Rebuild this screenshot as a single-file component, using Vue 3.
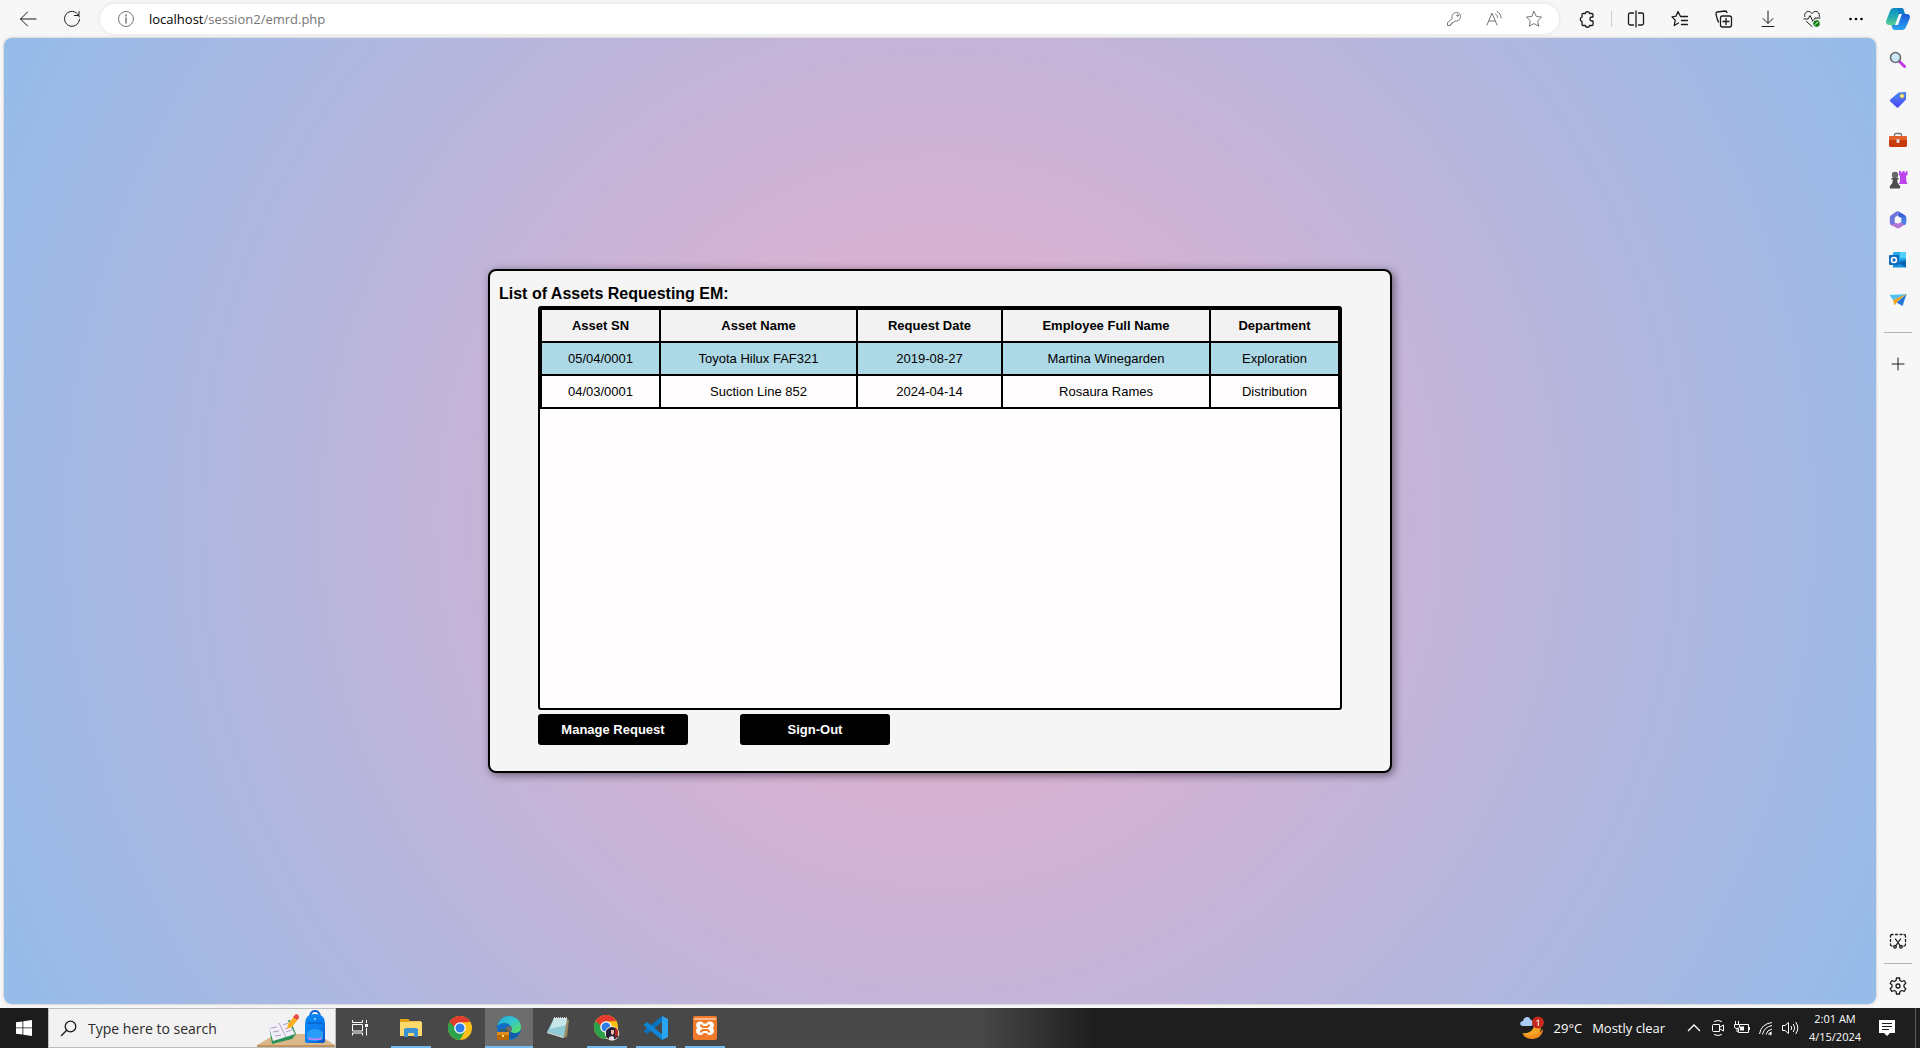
<script setup>
const columns = ['Asset SN', 'Asset Name', 'Request Date', 'Employee Full Name', 'Department']

const requests = [
  { sn: '05/04/0001', name: 'Toyota Hilux FAF321', date: '2019-08-27', employee: 'Martina Winegarden', department: 'Exploration', urgent: true },
  { sn: '04/03/0001', name: 'Suction Line 852', date: '2024-04-14', employee: 'Rosaura Rames', department: 'Distribution', urgent: false }
]
</script>

<template>
  <div class="screen">
    <header class="toolbar">
      <button class="tool" aria-label="Back">
        <svg width="18" height="18" viewBox="0 0 18 18" class="line dark"><path d="M17 9H1.500M8.500 2L1.500 9l7 7" /></svg>
      </button>
      <button class="tool" aria-label="Refresh">
        <svg width="18" height="18" viewBox="0 0 18 18" class="line dark"><path d="M16.300 7A7.500 7.500 0 1 0 16.500 9.500M16 1.500V5.500H11.500" /></svg>
      </button>
      <div class="address">
        <svg width="18" height="18" viewBox="0 0 18 18" class="line muted"><circle cx="9" cy="9" r="7.500" /><path d="M9 8v5M9 5v1" stroke-width="1.500" /></svg>
        <a class="url" href="#"><span class="host">localhost</span>/session2/emrd.php</a>
        <button class="pill-tool" aria-label="Passwords">
          <svg width="16" height="16" viewBox="0 0 16 16" class="line muted"><path d="M6 7.500C5.300 4 7.500 1.500 10.500 1.500c2.500 0 4 1.800 4 4 0 3-2.500 5-5.500 4.500L7.500 11.500H6v1.500H4.500v1.500H1.500V12z" /><circle cx="11.500" cy="4.500" r="0.800" /></svg>
        </button>
        <button class="pill-tool" aria-label="Read aloud">
          <svg width="18" height="18" viewBox="0 0 18 18" class="line muted"><path d="M2 15L7 3l5 12M4 11h6M10.500 4c1.300.7 2 1.800 2 3.500M12 1.500c2.500 1.200 4 3.300 4 6.500" /></svg>
        </button>
        <button class="pill-tool" aria-label="Add to favorites">
          <svg width="18" height="18" viewBox="0 0 18 18" class="line muted"><path d="M9 1.500l2.300 4.900 5.300.7-3.900 3.700 1 5.400L9 13.600l-4.700 2.600 1-5.400L1.400 7.100l5.300-.7z" /></svg>
        </button>
      </div>
      <button class="tool first" aria-label="Extensions">
        <svg width="18" height="18" viewBox="0 0 18 18" class="line dark bold"><path d="M5 3.500H7.300a2.200 2.200 0 0 1 4.300 0H14a1 1 0 0 1 1 1V7h-1a2 2 0 0 0 0 4h1v3.500a1 1 0 0 1-1 1h-2.400a2.200 2.200 0 0 1-4.300 0H5a1 1 0 0 1-1-1v-3a2.200 2.200 0 0 1 0-4.300V4.500a1 1 0 0 1 1-1z" /></svg>
      </button>
      <span class="bar"></span>
      <button class="tool" aria-label="Split screen">
        <svg width="18" height="18" viewBox="0 0 18 18" class="line dark bold"><path d="M6.500 3H3a1.500 1.500 0 0 0-1.500 1.500v9A1.500 1.500 0 0 0 3 15h3.500M11.500 3H15a1.500 1.500 0 0 1 1.500 1.500v9A1.500 1.500 0 0 1 15 15h-3.500M9 1v16" /></svg>
      </button>
      <button class="tool" aria-label="Favorites">
        <svg width="18" height="18" viewBox="0 0 18 18" class="line dark bold"><path d="M16.500 6.500H9.500L7 1.500 5 6.200 1 6.900l3.200 3.200-.9 5.400L7.500 13M10.500 10.500h6M10.500 14.500h6" /></svg>
      </button>
      <button class="tool" aria-label="Collections">
        <svg width="18" height="18" viewBox="0 0 18 18" class="line dark bold"><rect x="5.500" y="6" width="11" height="11" rx="2" /><path d="M11 8.500v6M8 11.500h6M3.500 12C2 10 1.500 6 1 3.800c-.1-1 .3-1.600 1.200-1.800L10 1c1.300 0 1.800.5 2 1.500" /></svg>
      </button>
      <button class="tool" aria-label="Downloads">
        <svg width="18" height="18" viewBox="0 0 18 18" class="line dark"><path d="M9 1v12M4 8.500l5 5 5-5M3 16.500h12" /></svg>
      </button>
      <button class="tool" aria-label="Browser essentials">
        <svg width="18" height="18" viewBox="0 0 18 18" class="line dark"><path d="M1.800 6.500C1 3.500 3 1.500 5.200 1.500c1.700 0 3 .8 3.800 2.200.8-1.400 2.100-2.200 3.800-2.200 2.300 0 4.200 2 3.500 5M1 9h4l2-3.500 3 6L12 8h5M3.500 11.500L9 16.500" /><circle cx="13.500" cy="13.500" r="3.800" class="green" /><path d="M12 14.500l3-2.500" class="check" /></svg>
      </button>
      <button class="tool" aria-label="Settings and more">
        <svg width="18" height="18" viewBox="0 0 18 18"><circle cx="3.500" cy="9" r="1.300" /><circle cx="9" cy="9" r="1.300" /><circle cx="14.500" cy="9" r="1.300" /></svg>
      </button>
      <button class="copilot" aria-label="Copilot">
        <svg width="24" height="24" viewBox="0 0 24 24">
          <defs>
            <linearGradient id="cpa" x1="0" y1="0" x2="0" y2="1"><stop offset="0" stop-color="#0c8fc4" /><stop offset=".5" stop-color="#1fa9b5" /><stop offset="1" stop-color="#5bd08c" /></linearGradient>
            <linearGradient id="cpb" x1="0" y1="0" x2="0" y2="1"><stop offset="0" stop-color="#1b58d6" /><stop offset="1" stop-color="#2aa5f2" /></linearGradient>
          </defs>
          <path d="M8 1h7c2 0 2.500 1 3 3l1 3h-3c-2 0-2.500 1-3 2.500L11 16c-.5 1.500-1.500 2-3 2H3c-2.500 0-3.500-2-2.700-4.500L4 4c.7-2 2-3 4-3z" fill="url(#cpa)" />
          <path d="M16 23H9c-2 0-2.500-1-3-3l-.6-2H8c2 0 2.500-1 3-2.500L13 9c.5-1.500 1.500-2 3-2h5c2.500 0 3.500 2 2.700 4.500L20 20c-.7 2-2 3-4 3z" fill="url(#cpb)" />
          <path d="M13 7h3l-4 11H9z" fill="#f4faff" /><path d="M8 1h7c2 0 2.500 1 3 3l1 3h-6L11 1z" fill="#0874c9" opacity=".7" />
        </svg>
      </button>
    </header>

    <div class="window">
      <main class="page">
        <section class="card">
          <h1>List of Assets Requesting EM:</h1>
          <div class="list">
            <table>
              <colgroup><col class="c-sn" /><col class="c-name" /><col class="c-date" /><col class="c-employee" /><col class="c-department" /></colgroup>
              <thead>
                <tr><th v-for="column in columns" :key="column" scope="col">{{ column }}</th></tr>
              </thead>
              <tbody>
                <tr v-for="request in requests" :key="request.sn" :class="{ urgent: request.urgent }">
                  <td>{{ request.sn }}</td>
                  <td>{{ request.name }}</td>
                  <td>{{ request.date }}</td>
                  <td>{{ request.employee }}</td>
                  <td>{{ request.department }}</td>
                </tr>
              </tbody>
            </table>
          </div>
          <div class="actions">
            <button class="action">Manage Request</button>
            <button class="action">Sign-Out</button>
          </div>
        </section>
      </main>

      <aside class="sidebar">
        <button class="side" aria-label="Search">
          <svg width="18" height="18" viewBox="0 0 18 18"><path d="M10.500 10.500l5 5" stroke="#c239e8" stroke-width="3" stroke-linecap="round" /><circle cx="6.500" cy="6.500" r="5" fill="#c9e9fb" stroke="#6b6b6b" stroke-width="1.600" /></svg>
        </button>
        <button class="side" aria-label="Shopping">
          <svg width="18" height="18" viewBox="0 0 18 18"><defs><linearGradient id="tag" x1="0" y1="0" x2="0" y2="1"><stop offset="0" stop-color="#4a8cf5" /><stop offset="1" stop-color="#4a45f0" /></linearGradient></defs><path d="M9.500 1.500L16 1c.8 0 1.200.4 1.200 1.200l-.2 6.300-7.500 7.700c-.6.600-1.400.6-2 0L1.300 10.500c-.6-.6-.6-1.300 0-1.900z" fill="url(#tag)" /><circle cx="13" cy="5" r="1.800" fill="#fff3a8" stroke="#f3c832" /></svg>
        </button>
        <button class="side" aria-label="Tools">
          <svg width="18" height="18" viewBox="0 0 18 18"><path d="M5.500 6V4c0-1 .5-1.500 1.500-1.500h4c1 0 1.500.5 1.500 1.500v2" fill="none" stroke="#747474" stroke-width="1.300" /><rect y="5" width="18" height="11" rx="1.500" fill="#c73b0b" /><path d="M0 6.500Q0 5 1.500 5h15Q18 5 18 6.500V9H0z" fill="#e4602b" /><rect x="7.500" y="8" width="3" height="4" rx="1" fill="#ddd" /></svg>
        </button>
        <button class="side" aria-label="Games">
          <svg width="20" height="20" viewBox="0 0 20 20"><path d="M11 1h2v1.500h1.500V1h2v1.500H18V1h1.500v4L18 6l.5 6 1 2h-9l1.500-2V6l-1-1z" fill="#bd45ee" /><circle cx="7" cy="5" r="3.200" fill="#686868" /><path d="M3.500 8h7v1.500H9.200c0 3 .8 4.500 2.500 6 .8.700.8 3-.2 3h-9c-1 0-1-2.300-.2-3 1.700-1.500 2.500-3 2.500-6H3.500z" fill="#4d4d4d" /></svg>
        </button>
        <button class="side" aria-label="Microsoft 365">
          <svg width="18" height="18" viewBox="0 0 18 18"><path d="M9 .3l6.300 3.500c1.300.8 1.900 1.700 1.900 3.200V11L9 9z" fill="#3d63d6" /><path d="M9 .3C10.500 1 10.500 2.500 9.500 3.500L6 6.500v7L3.500 15C1.500 14 .8 13 .8 11.500V6.500c0-1.200.6-2 1.600-2.600L7 .7C7.700.2 8.300 0 9 .3z" fill="#6d78dd" /><path d="M.8 11c.8 2.500 3.200 2.500 5 1.500l6-3 5.400 1c0 1.500-.5 2.600-1.700 3.300L10.500 17c-1 .6-2 .6-3 0l-5-3C1.300 13.200.8 12.300.8 11z" fill="#b277d4" /><path d="M12.300 6l4.900 1v4.500c0 1.200-.6 2-1.700 2.700l-3.200-2.700z" fill="#4a80e6" /><path d="M9 5.200l3.300 1.900v3.800L9 12.800l-3.300-1.900V7.100z" fill="#f7f7f7" /></svg>
        </button>
        <button class="side" aria-label="Outlook">
          <svg width="18" height="18" viewBox="0 0 18 18"><rect x="4" y="1" width="13" height="12" rx="1" fill="#28a8ea" /><path d="M4 9h13v7.500H4z" fill="#1490df" /><path d="M11 1h6v6h-6z" fill="#50d0fb" /><path d="M17 9v7.500L9.500 12z" fill="#0a64b0" /><rect x="0" y="4" width="10" height="10" rx="1" fill="#0f6cbd" /><circle cx="5" cy="9" r="2.500" fill="none" stroke="#fff" stroke-width="1.600" /></svg>
        </button>
        <button class="side" aria-label="Drop">
          <svg width="18" height="18" viewBox="0 0 18 18"><path d="M.5 4L17.500 3 9 9.500 4 9z" fill="#50c3f3" /><path d="M17.500 3L13.500 15 7.500 11.500z" fill="#2477dc" /><path d="M17.500 3L4 9l1.500 5.500 3-4z" fill="#f2a51f" /></svg>
        </button>
        <span class="rule"></span>
        <button class="side" aria-label="Customize">
          <svg width="14" height="14" viewBox="0 0 14 14" class="line dark"><path d="M7 1v12M1 7h12" /></svg>
        </button>
        <button class="side bottom" aria-label="Screenshot">
          <svg width="18" height="18" viewBox="0 0 18 18" class="line dark bold"><path d="M6.500 2.500h2M11 2.500h2M4 2.500H3Q1.500 2.500 1.500 4v1M1.500 7.500v2M1.500 12v.5Q1.500 14 3 14M15 2.500q1.500 0 1.500 1.500v1M16.500 7.500v2M16.500 12v.5q0 1.500-1.500 1.500M6.500 7l4.500 6.500M11.500 7L7 13.500" /><circle cx="6" cy="14.800" r="1.300" /><circle cx="12" cy="14.800" r="1.300" /></svg>
        </button>
        <span class="rule tight"></span>
        <button class="side" aria-label="Settings">
          <svg width="18" height="18" viewBox="0 0 18 18" class="line dark bold"><path d="M7.500 1h3l.5 2.500 1.800 1 2.500-.8 1.500 2.600L15 8v2l1.800 1.700-1.500 2.600-2.500-.8-1.800 1-.5 2.500h-3L7 14.500l-1.800-1-2.500.8-1.500-2.600L3 10V8L1.200 6.300l1.500-2.600 2.500.8 1.800-1z" /><circle cx="9" cy="9" r="2" /></svg>
        </button>
      </aside>
    </div>

    <footer class="taskbar">
      <button class="start" aria-label="Start">
        <svg width="16" height="16" viewBox="0 0 16 16" fill="#fff"><path d="M0 2.300l6.500-.9v6.100H0zM7.300 1.300L16 0v7.500H7.300zM0 8.300h6.500v6.300L0 13.700zM7.300 8.300H16V16l-8.700-1.200z" /></svg>
      </button>
      <label class="search">
        <svg width="17" height="17" viewBox="0 0 17 17" fill="none" stroke="#1a1a1a" stroke-width="1.300"><circle cx="10.500" cy="6.500" r="5.300" /><path d="M6.700 10.300L1 16" /></svg>
        <input type="text" placeholder="Type here to search" aria-label="Type here to search" />
        <svg class="doodle" width="78" height="38" viewBox="0 0 78 38">
          <defs><linearGradient id="pack" x1="0" y1="0" x2="1" y2="1"><stop offset="0" stop-color="#0b8cf5" /><stop offset=".6" stop-color="#0b7cf0" /><stop offset="1" stop-color="#0b4fc4" /></linearGradient></defs>
          <path d="M0 36L19 25h41l18 11z" fill="#dab889" /><path d="M0 36h78v2H0z" fill="#c0935f" />
          <path d="M12 17l21-6 6 14-4 5-20 5z" fill="#2b9156" /><path d="M11 15l11-1 8-4 8 15-9 3-13 4z" fill="#f3effa" /><path d="M22 14l7 14M14 19l6-1M16 23l6-1M18 27l6-1M26 16l5-2M28 20l5-2M29 23l6-2" stroke="#aaa2bf" fill="none" />
          <path d="M30 20l1-5 7-9 4 3-7 9z" fill="#ffae23" /><path d="M36 8l3-3q3 0 3 4l-2 2z" fill="#e94f4c" />
          <path d="M53 7q1-5 5-5t5 5" fill="none" stroke="#0b63d6" stroke-width="2" /><path d="M48 15Q48 5 58 5t10 10v17q0 2-3 2H51q-3 0-3-2z" fill="url(#pack)" /><path d="M50 23q8-6 16 0v7q-8 4-16 0z" fill="#2a9df9" /><path d="M51 28q7 3 14 0l-1 3H52z" fill="#bb83f5" /><path d="M50 14h16" stroke="#0953bd" /><path d="M58 9v2" stroke="#fff" />
        </svg>
      </label>

      <nav class="apps">
        <button class="app view" aria-label="Task View">
          <svg width="18" height="18" viewBox="0 0 18 18" fill="none" stroke="#fff"><path d="M1.500 1v2.500h10V1M1.500 16.500V14h10v2.500M1.500 5.500h10v6.500h-10zM15.500 1v3M15.500 9v7.500" /><path d="M15.500 5v3" stroke-width="3" /></svg>
        </button>
        <button class="app open" aria-label="File Explorer">
          <svg width="24" height="24" viewBox="0 0 24 24"><path d="M1 3h8l2 2h11v15H1z" fill="#f2c14a" /><path d="M1 6h22v14H1z" fill="#ffd96c" /><path d="M1 3h8l2 3H1z" fill="#e8a211" /><path d="M5 21v-8l2-1h10l2 1v8h-4v-4H9v4z" fill="#3a91d5" /></svg>
        </button>
        <button class="app" aria-label="Chrome">
          <svg width="24" height="24" viewBox="0 0 24 24"><circle cx="12" cy="12" r="12" fill="#fbc116" /><path d="M1.600 6A12 12 0 0 1 22.400 6L12 6.500 7.500 15z" fill="#e33b2e" /><path d="M1.600 6A12 12 0 0 0 12 24l5-9-5 1z" fill="#2ba24c" /><circle cx="12" cy="12" r="5.800" fill="#fff" /><circle cx="12" cy="12" r="4.500" fill="#2f7de9" /></svg>
        </button>
        <button class="app active open" aria-label="Edge">
          <svg width="24" height="24" viewBox="0 0 24 24"><defs><linearGradient id="edge" x1="0" y1="0" x2="1" y2="1"><stop offset="0" stop-color="#1fa7de" /><stop offset=".5" stop-color="#35c8c9" /><stop offset="1" stop-color="#5ee34e" /></linearGradient></defs><circle cx="12" cy="12" r="12" fill="#0e6ec3" /><path d="M.5 10C2 3 7 0 12 0c7 0 12 5 12 11 0 4-3 6-6.500 6-2.500 0-4-1-4-2 1.500-1 1.500-7-5-8C5 6.700 2 8 .5 10z" fill="url(#edge)" /><path d="M9 11c1-2 4-2 5 0 .8 1.500.2 3-.5 4 0 1.500 2 3 6 2l3-1c-2 4-6 7-10 6-4-1-5-7-3.500-11z" fill="#155aa5" /><circle cx="12" cy="13" r="3" fill="#6b6b6b" /><path d="M4 16v-2h6v2" stroke="#7a4a05" fill="none" /><rect y="16" width="12" height="8" fill="#b96a05" /><path d="M0 16h12v3H0z" fill="#dd8d18" /><path d="M5 19h2v2H5z" fill="#ffe06a" /></svg>
        </button>
        <button class="app" aria-label="Notepad">
          <svg width="24" height="24" viewBox="0 0 24 24"><path d="M20 3l3 1-2 17-4 1z" fill="#9b855e" /><path d="M8 2h13l-3 19L1 16z" fill="#8fc9d4" /><path d="M8 2h13l-1 7L4 13z" fill="#c8e6ea" /><path d="M8 2h13" stroke="#eee" stroke-width="1.500" stroke-dasharray="1 1" /><path d="M1 16l17 5-1 1-16-5z" fill="#e6eef0" /></svg>
        </button>
        <button class="app open" aria-label="Chrome profile">
          <svg width="26" height="26" viewBox="0 0 26 26"><circle cx="12" cy="12" r="12" fill="#fbc116" /><path d="M1.600 6A12 12 0 0 1 22.400 6L12 6.500 7.500 15z" fill="#e33b2e" /><path d="M1.600 6A12 12 0 0 0 12 24l5-9-5 1z" fill="#2ba24c" /><circle cx="12" cy="12" r="5.800" fill="#fff" /><circle cx="12" cy="12" r="4.500" fill="#2f7de9" /><circle cx="18" cy="18.500" r="7.200" fill="#f3ead0" /><path d="M12 16q6-8 12 0v6q-6 5-12 0z" fill="#25203a" /><path d="M21 12q4 3 3 9l-3 1z" fill="#b5261e" /><path d="M17 15h3v3l-1 2-2-1z" fill="#eab9a0" /><path d="M15 22l3-1 2 1v3h-5z" fill="#e2dbe0" /></svg>
        </button>
        <button class="app open" aria-label="Visual Studio Code">
          <svg width="24" height="24" viewBox="0 0 24 24"><path d="M18 0l6 3v18l-6 3z" fill="#2ba5f0" /><path d="M18 0v6L3 18 0 15.500v-1z" fill="#0a72bd" /><path d="M0 8.500L3 6l15 12v6L0 9.500z" fill="#1286d6" /></svg>
        </button>
        <button class="app open" aria-label="XAMPP">
          <svg width="24" height="24" viewBox="0 0 24 24"><rect width="24" height="24" rx="2" fill="#f0792a" /><path d="M1 2h22v2H1z" fill="#f9b98b" /><path d="M7 5.500c1.500 0 3 .5 3.500 2h3c.5-1.500 2-2 3.500-2 3.500 0 5 3.500 3 6.500 2 3 .5 7-3 7-1.500 0-3-.5-3.500-2h-3c-.5 1.500-2 2-3.500 2-3.500 0-5-4-3-7-2-3-.5-6.500 3-6.500z" fill="#fff" /><path d="M7 9.500h1.500l1 1.500h5l1-1.500H17M7 15.500h1.500l1-1.500h5l1 1.500H17" fill="none" stroke="#f0792a" stroke-width="1.800" /></svg>
        </button>
      </nav>

      <button class="weather">
        <svg width="24" height="24" viewBox="0 0 24 24"><path d="M21 11a10.500 10.500 0 0 1-19 6c6 1 11-2 12-7z" fill="#f5a524" /><path d="M23 13c0 6-5 10-11 10-4 0-7-1.500-9-4 8 2 16-1 20-6z" fill="#f08b1d" /><path d="M3 10c-4 0-3.500-5 0-5C4 0 10 0 10.500 4c4-.5 4 6 0 6z" fill="#a9cbf5" /><circle cx="18" cy="6.500" r="6" fill="#c42b1c" /><path d="M16.500 5l1.800-1v6" fill="none" stroke="#fff" /></svg>
        <span>29°C</span><span>Mostly clear</span>
      </button>
      <div class="tray">
        <button class="glyph" aria-label="Show hidden icons">
          <svg width="14" height="16" viewBox="0 0 14 16"><path d="M1 11l6-6 6 6" stroke-width="1.300" /></svg>
        </button>
        <button class="glyph" aria-label="Meet Now">
          <svg width="14" height="18" viewBox="0 0 14 18"><path d="M2.500 5.500h6v7h-6q-1 0-1-1v-5q0-1 1-1zM9 8l3.500-2v6L9 10M3 2.500Q7 .5 11 2.500M3 15.500q4 2 8 0" /></svg>
        </button>
        <button class="glyph" aria-label="Battery">
          <svg width="18" height="16" viewBox="0 0 18 16"><path d="M7 4.500h8.500v8H5.500V9M16.500 7v3M2.500 1v3M5.500 1v3M1.500 4.500h5V7Q6.500 8.500 4 8.500T1.500 7zM4 8.500V12" /><path d="M7 6.500h4v4H7z" fill="#fff" stroke="none" /></svg>
        </button>
        <button class="glyph" aria-label="Network">
          <svg width="16" height="16" viewBox="0 0 16 16"><path d="M1.500 14Q3 4 14 2.500M4.500 14.500Q6 7 14 5.500M8 14.500Q9 10 14 9M10.500 14.500q.5-2 3.500-2.500" /><circle cx="12.500" cy="14" r="1.200" fill="#fff" stroke="none" /></svg>
        </button>
        <button class="glyph" aria-label="Volume">
          <svg width="18" height="16" viewBox="0 0 18 16"><path d="M1.500 5.500H4L7.500 2.500v11L4 10.500H1.500zM10 6q1.500 2 0 4M12.300 4q3 4 0 8M14.600 2q4.500 6 0 12" /></svg>
        </button>
      </div>
      <time class="clock" datetime="2024-04-15T02:01"><span>2:01 AM</span><span>4/15/2024</span></time>
      <button class="notice" aria-label="Notifications">
        <svg width="16" height="16" viewBox="0 0 16 16"><path d="M0 0h16v13h-5l-3 3-3-3H0z" fill="#fff" /><path d="M3 3.500h10M3 6.500h10M3 9.500h7" stroke="#1c1c1c" /></svg>
      </button>
      <button class="desktop" aria-label="Show desktop"></button>
    </footer>
  </div>
</template>

<style>
body {
  margin: 0;
  background: #f7f7f7;
}
</style>

<style scoped>
.screen {
  display: flex;
  flex-direction: column;
  min-height: 100vh;
  font-family: "Open Sans", "Noto Sans", sans-serif;
}

button {
  display: flex;
  align-items: center;
  justify-content: center;
  flex: none;
  margin: 0;
  padding: 0;
  border: 0;
  background: none;
  color: inherit;
  font: inherit;
}

svg {
  display: block;
  flex: none;
}

.line {
  fill: none;
  stroke-linecap: round;
  stroke-linejoin: round;
}

.dark {
  stroke: #1b1b1b;
}

.muted {
  stroke: #767676;
}

.bold {
  stroke-width: 1.3;
}

.green {
  fill: #107c10;
  stroke: #f7f7f7;
}

.check {
  stroke: #fff;
}

/* Browser toolbar */
.toolbar {
  display: flex;
  align-items: center;
  height: 38px;
  padding: 0 2px 0 6px;
  background: #f7f7f7;
}

.tool {
  width: 44px;
  height: 34px;
}

.first {
  margin-left: 6px;
}

.bar {
  width: 1px;
  height: 16px;
  margin: 0 2px;
  background: #cfcfcf;
}

.address {
  display: flex;
  flex: 1;
  align-items: center;
  box-sizing: border-box;
  height: 30px;
  margin-left: 6px;
  padding: 0 5px 0 17px;
  border-radius: 15px;
  background: #fff;
  box-shadow: 0 0 4px #0000001a;
}

.url {
  flex: 1;
  margin-left: 14px;
  color: #767676;
  font-size: 13px;
  line-height: 20px;
  text-decoration: none;
}

.host {
  color: #000;
}

.pill-tool {
  width: 40px;
  height: 30px;
}

.copilot {
  width: 40px;
  height: 38px;
}

/* Web page and browser sidebar */
.window {
  display: flex;
  flex: 1;
  background: #f7f7f7;
}

.page {
  display: flex;
  flex: 1;
  align-items: center;
  justify-content: center;
  margin: 0 0 4px 4px;
  border-radius: 8px;
  background: radial-gradient(circle, #eeaeca 0%, #94bbe9 100%);
  box-shadow: 0 0 3px #00000040;
}

.sidebar {
  display: flex;
  flex-direction: column;
  align-items: center;
  width: 44px;
  padding: 2px 0;
}

.side {
  width: 40px;
  height: 40px;
}

.rule {
  width: 28px;
  height: 1px;
  margin: 12px 0 11px;
  background: #b5b5b5;
}

.tight {
  margin: 2px 0;
}

.bottom {
  margin-top: auto;
}

/* Asset request card */
.card {
  box-sizing: border-box;
  width: 904px;
  padding: 13px 48px 26px;
  border: 2px solid #000;
  border-radius: 8px;
  background: #f5f5f5;
  box-shadow: 2px 2px 8px #00000080;
  color: #000;
  font-family: "Liberation Sans", Arial, sans-serif;
}

h1 {
  margin: 0 0 2px -39px;
  font-size: 16px;
  line-height: 20px;
}

.list {
  height: 400px;
  border: 2px solid #000;
  border-radius: 3px;
  background: #fffcfd;
}

table {
  width: 100%;
  border-collapse: collapse;
  table-layout: fixed;
  font-size: 13px;
  line-height: 15px;
  text-align: center;
}

th,
td {
  padding: 8px;
  border: 2px solid #000;
}

th {
  background: #f2f2f2;
}

.urgent {
  background: #add8e6;
}

.c-sn {
  width: 119px;
}

.c-name {
  width: 197px;
}

.c-date {
  width: 145px;
}

.c-employee {
  width: 208px;
}

.actions {
  display: flex;
  gap: 52px;
  margin-top: 4px;
}

.action {
  width: 150px;
  height: 31px;
  border-radius: 3px;
  background: #000;
  color: #fff;
  font-size: 13px;
  font-weight: bold;
}

/* Desktop taskbar */
.taskbar {
  display: flex;
  align-items: stretch;
  height: 40px;
  background: linear-gradient(90deg, #1c1c1c 0 17%, #484848 17% 51%, #1e1e1e 57%);
  color: #fff;
}

.start {
  width: 48px;
}

.search {
  display: flex;
  align-items: center;
  box-sizing: border-box;
  width: 288px;
  padding-left: 11px;
  border: 1px solid #bdbdbd;
  background: #f2f2f2;
}

.search input {
  flex: 1;
  min-width: 0;
  margin-left: 11px;
  padding: 0;
  border: 0;
  background: none;
  font: 14px "Open Sans", "Noto Sans", sans-serif;
}

.search input::placeholder {
  color: #2b2b2b;
  opacity: 1;
}

.apps {
  display: flex;
  flex: 1;
  gap: 1px;
}

.app {
  box-sizing: border-box;
  width: 48px;
  border: solid transparent;
  border-width: 2px 4px;
}

.view {
  margin-right: 2px;
}

.app.open {
  width: 40px;
  margin: 0 4px;
  border-width: 2px 0;
  border-bottom-color: #76b9ed;
}

.app.active {
  width: 48px;
  margin: 0;
  background: #6d6d6d;
}

.weather {
  gap: 10px;
  margin-right: 17px;
  font-size: 13px;
}

.tray {
  display: flex;
  align-items: center;
}

.glyph {
  width: 24px;
  height: 40px;
}

.glyph svg {
  fill: none;
  stroke: #fff;
}

.clock {
  display: flex;
  flex-direction: column;
  align-items: center;
  justify-content: center;
  width: 66px;
  font-size: 11px;
  line-height: 18px;
}

.notice {
  width: 36px;
  margin: 0 10px 0 1px;
}

.desktop {
  width: 5px;
  border-left: 1px solid #5a5a5a;
}
</style>
